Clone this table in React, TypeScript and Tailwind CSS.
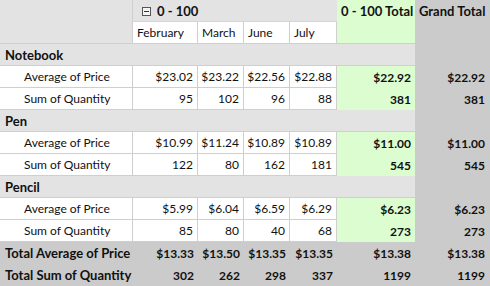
const months = ["February", "March", "June", "July"];

type Group = {
  name: string;
  rows: { label: string; values: string[]; total: string; grand: string }[];
};

const groups: Group[] = [
  {
    name: "Notebook",
    rows: [
      { label: "Average of Price", values: ["$23.02", "$23.22", "$22.56", "$22.88"], total: "$22.92", grand: "$22.92" },
      { label: "Sum of Quantity", values: ["95", "102", "96", "88"], total: "381", grand: "381" },
    ],
  },
  {
    name: "Pen",
    rows: [
      { label: "Average of Price", values: ["$10.99", "$11.24", "$10.89", "$10.89"], total: "$11.00", grand: "$11.00" },
      { label: "Sum of Quantity", values: ["122", "80", "162", "181"], total: "545", grand: "545" },
    ],
  },
  {
    name: "Pencil",
    rows: [
      { label: "Average of Price", values: ["$5.99", "$6.04", "$6.59", "$6.29"], total: "$6.23", grand: "$6.23" },
      { label: "Sum of Quantity", values: ["85", "80", "40", "68"], total: "273", grand: "273" },
    ],
  },
];

const totals = [
  { label: "Total Average of Price", values: ["$13.33", "$13.50", "$13.35", "$13.35"], total: "$13.38", grand: "$13.38" },
  { label: "Total Sum of Quantity", values: ["302", "262", "298", "337"], total: "1199", grand: "1199" },
];

const App = () => {
  return (
    <div
      className="w-[490px] h-[286px] overflow-hidden bg-white text-[12px] text-[#111] leading-none"
      style={{ fontFamily: "Lato, 'Open Sans', sans-serif" }}
    >
      <div className="grid grid-cols-[133px_65px_46px_46px_47px_78px_75px] auto-rows-[22px]">
        {/* header */}
        <div className="row-span-2 bg-[#e3e3e3] border-r border-b border-[#cfcfcf]" />
        <div className="col-span-4 flex items-center gap-1.5 pl-[9px] pt-px bg-[#e3e3e3] border-b border-[#d6d6d6] font-bold text-[13px]">
          <span className="w-[9px] h-[9px] border border-[#555] flex items-center justify-center bg-[#f4f4f4]">
            <span className="w-[5px] h-px bg-[#333]" />
          </span>
          0 - 100
        </div>
        <div className="row-span-2 bg-[#dcfdd0] border-b border-[#cfcfcf] font-bold text-[13px] pl-1 pt-[5px]">0 - 100 Total</div>
        <div className="row-span-2 bg-[#cbcbcb] font-bold text-[13px] pl-1 pt-[5px]">Grand Total</div>
        {months.map((m) => (
          <div key={m} className="flex items-center pl-1 pt-px border-r border-b border-[#cfcfcf]">
            {m}
          </div>
        ))}

        {groups.map((g) => (
          <div key={g.name} className="contents">
            <div className="col-span-6 flex items-center pl-[5px] pt-px bg-[#e3e3e3] border-b border-[#cfcfcf] font-bold text-[13px]">
              {g.name}
            </div>
            <div className="bg-[#cbcbcb]" />
            {g.rows.map((r) => (
              <div key={r.label} className="contents">
                <div className="flex items-center pl-6 pt-px border-r border-b border-[#cfcfcf]">{r.label}</div>
                {r.values.map((v, i) => (
                  <div key={i} className="flex items-center justify-end pr-1 pt-px border-r border-b border-[#cfcfcf]">
                    {v}
                  </div>
                ))}
                <div className="flex items-center justify-end pr-1 pt-px bg-[#dcfdd0] font-bold">{r.total}</div>
                <div className="flex items-center justify-end pr-[5px] pt-px bg-[#cbcbcb] font-bold">{r.grand}</div>
              </div>
            ))}
          </div>
        ))}

        {totals.map((r) => (
          <div key={r.label} className="contents">
            <div className="flex items-center pl-[5px] pt-px bg-[#cbcbcb] font-bold text-[13px]">{r.label}</div>
            {r.values.map((v, i) => (
              <div key={i} className="flex items-center justify-end pr-1 pt-px bg-[#cbcbcb] font-bold">
                {v}
              </div>
            ))}
            <div className="flex items-center justify-end pr-1 pt-px bg-[#cbcbcb] font-bold">{r.total}</div>
            <div className="flex items-center justify-end pr-[5px] pt-px bg-[#cbcbcb] font-bold">{r.grand}</div>
          </div>
        ))}
      </div>
    </div>
  );
};

export default App;
